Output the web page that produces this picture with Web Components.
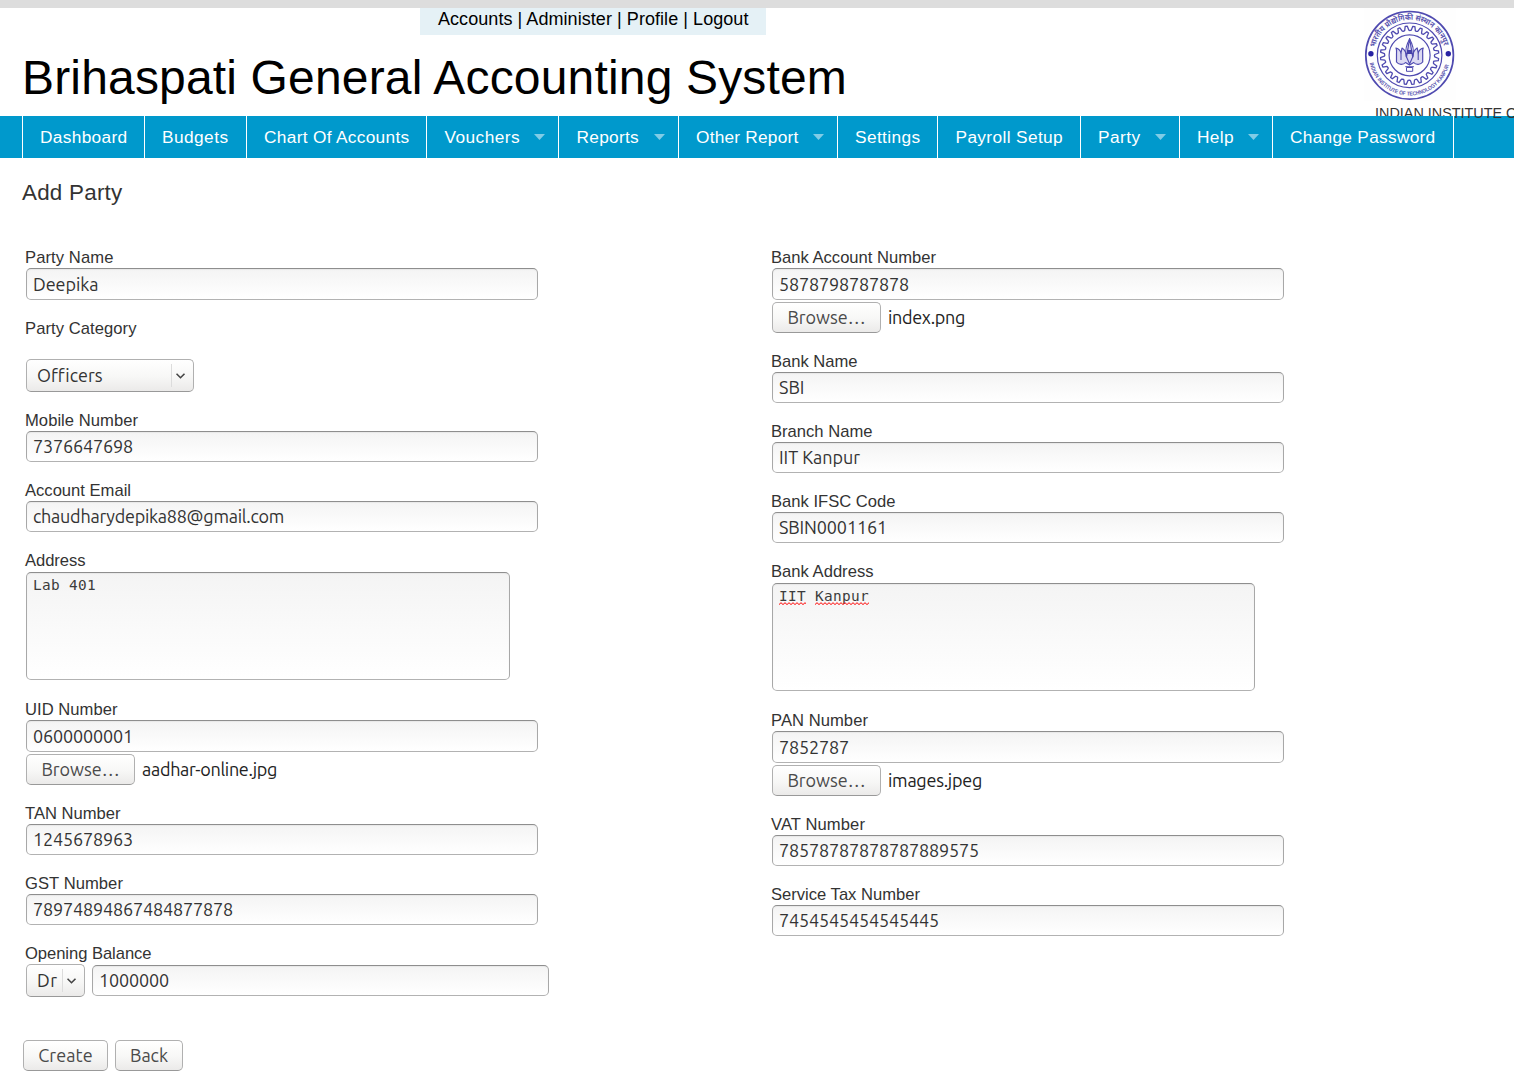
<!DOCTYPE html>
<html lang="en">
<head>
<meta charset="utf-8">
<title>Brihaspati General Accounting System</title>
<style>
html,body{margin:0;padding:0}
body{background:#fff;font-family:"Liberation Sans",Arial,sans-serif;color:#333;width:1514px;height:1076px;overflow:hidden}
</style>
</head>
<body>
<account-page></account-page>
<script>
const define=(name,render,after)=>customElements.define(name,class extends HTMLElement{
  connectedCallback(){
    if(this.shadowRoot)return;
    this.attachShadow({mode:'open'}).innerHTML=render(this);
    if(after)after(this);
  }
});
const at=(el,n,d='')=>el.getAttribute(n)??d;

define('account-page',()=>`
<style>
:host{display:flex;flex-direction:column;width:1514px;height:1076px;overflow:hidden}
h2{font-weight:400;font-size:22.4px;line-height:26px;margin:22px 0 0 22px;color:#333}
.columns{display:flex;padding:41px 0 0 25px;height:834px;box-sizing:border-box;flex:none}
.col{display:flex;flex-direction:column;width:746px;flex:none}
.actions{display:flex;gap:7px;padding-left:23px}
</style>
<page-header></page-header>
<nav-bar></nav-bar>
<h2><fit-text w="100.5">Add Party</fit-text></h2>
<div class="columns">
 <div class="col">
  <form-field label="Party Name" lw="88.5" h="71"><text-box h="32" value="Deepika" vw="65.5"></text-box></form-field>
  <form-field label="Party Category" lw="111.5" h="92" gap="20"><select-box w="168" value="Officers" vw="65"></select-box></form-field>
  <form-field label="Mobile Number" lw="113" h="70"><text-box value="7376647698" vw="100"></text-box></form-field>
  <form-field label="Account Email" lw="106" h="70"><text-box value="chaudharydepika88@gmail.com" vw="251"></text-box></form-field>
  <form-field label="Address" lw="60.5" h="149" gap="1"><text-area w="484"><fit-text w="63">Lab 401</fit-text></text-area></form-field>
  <form-field label="UID Number" lw="92.500" h="104"><text-box h="32" value="0600000001" vw="100"></text-box><file-picker file="aadhar-online.jpg" fw="135"></file-picker></form-field>
  <form-field label="TAN Number" lw="95.5" h="70"><text-box value="1245678963" vw="100"></text-box></form-field>
  <form-field label="GST Number" lw="98" h="70"><text-box value="78974894867484877878" vw="200"></text-box></form-field>
  <form-field label="Opening Balance" lw="126.5" h="70"><opening-balance></opening-balance></form-field>
 </div>
 <div class="col">
  <form-field label="Bank Account Number" lw="165" h="104"><text-box h="32" value="5878798787878" vw="130"></text-box><file-picker file="index.png" fw="77"></file-picker></form-field>
  <form-field label="Bank Name" lw="86.5" h="70"><text-box value="SBI" vw="25.5"></text-box></form-field>
  <form-field label="Branch Name" lw="101.5" h="70"><text-box value="IIT Kanpur" vw="81"></text-box></form-field>
  <form-field label="Bank IFSC Code" lw="124.5" h="70"><text-box value="SBIN0001161" vw="108"></text-box></form-field>
  <form-field label="Bank Address" lw="102.5" h="149" gap="1"><text-area w="483"><misspelled-word><fit-text w="27">IIT</fit-text></misspelled-word><fit-text w="9">&nbsp;</fit-text><misspelled-word><fit-text w="54">Kanpur</fit-text></misspelled-word></text-area></form-field>
  <form-field label="PAN Number" lw="97" h="104"><text-box h="32" value="7852787" vw="70"></text-box><file-picker file="images.jpeg" fw="94"></file-picker></form-field>
  <form-field label="VAT Number" lw="94" h="70"><text-box value="78578787878787889575" vw="200"></text-box></form-field>
  <form-field label="Service Tax Number" lw="149" h="70"><text-box value="7454545454545445" vw="160"></text-box></form-field>
 </div>
</div>
<div class="actions"><push-button w="85" tw="54.5">Create</push-button><push-button w="68" tw="38">Back</push-button></div>`);

define('page-header',()=>`
<style>
:host{display:block;height:116px;box-sizing:border-box;border-top:8px solid #ddd;position:relative;color:#000;flex:none}
.links{margin-left:420px;width:346px;height:27px;background:#e5f1f6;box-sizing:border-box;padding-left:18px;font-size:18px;line-height:22px;white-space:pre}
h1{margin:15px 0 0 22px;font-weight:400;font-size:48px;line-height:55px}
.brand{position:absolute;z-index:1;left:1360px;top:0;width:154px;overflow:hidden;height:122px;color:#333}
iit-seal{margin:0 0 0 4px}
.name{margin:4px 0 0 15px;font-size:14.4px;line-height:18px;white-space:nowrap}
</style>
<div class="links"><fit-text w="310.5">Accounts | Administer | Profile | Logout</fit-text></div>
<h1><fit-text w="825">Brihaspati General Accounting System</fit-text></h1>
<div class="brand"><iit-seal></iit-seal><div class="name">INDIAN INSTITUTE OF TECHNOLOGY KANPUR</div></div>`);

define('iit-seal',()=>{
  const teeth=24,p=[];
  for(let i=0;i<teeth;i++){
    [[0,24.8],[.25,25.2],[.42,29.2],[.7,29.2],[.88,25.2]].forEach(([f,r])=>{
      const a=(i+f)/teeth*Math.PI*2;
      p.push((45.6+r*Math.cos(a)).toFixed(2)+','+(47.3+r*Math.sin(a)).toFixed(2));
    });
  }
  return `
<style>:host{display:block;width:92px;height:92px}svg{display:block}text{font-family:"Liberation Sans","Noto Sans","Noto Sans Devanagari",sans-serif;fill:#5a55b0;font-weight:700}</style>
<svg width="92" height="93" viewBox="0 0 92 93" fill="none" stroke="#4f4ab0">
<rect width="92" height="93" fill="#fefefe" stroke="none"/>
<circle cx="45.6" cy="47.3" r="43.8" stroke-width="1.7"/>
<circle cx="45.6" cy="47.3" r="32.3" stroke-width="1.2"/>
<circle cx="45.6" cy="47.3" r="20.5" stroke-width="1.2"/>
<polygon points="${p.join(' ')}" stroke-width="1.3" stroke-linejoin="round"/>
<circle cx="6.9" cy="45.7" r="2.7" fill="#2722a3" stroke="none"/><circle cx="84.3" cy="45.7" r="2.7" fill="#2722a3" stroke="none"/>
<path fill="#dcdaf2" stroke-width="1.2" stroke-linejoin="round" d="M32 40c3.500 1 4.500 3 5 5l1-5c3 2 4.500 5 4.500 9L45.600 30.500 48.700 49c0-4 1.500-7 4.500-9l1 5c.5-2 1.500-4 5-5-1 2-.5 4-.5 6v8c-2 3-7 3-9 .5l-4.100 2.500-4.100-2.500c-2 2.500-7 2.500-9-.5v-8c0-2 .5-4-.5-6z"/>
<path d="M45.600 31c-3.500 6-4.500 11-3.500 17l3.500 8 3.500-8c1-6 0-11-3.500-17zM37 45v7M54.200 45v7" stroke-width="1.100"/>
<path d="M43 42h5.200v4H43z" fill="#4540a8" stroke="none"/>
<path d="M41.300 58.700h8.600M42.500 59.500h6.200v3.800h-6.200z" stroke-width="1"/>
<path id="upper" d="M10.500 41.500A35.600 35.600 0 0 1 80.700 41.500" stroke="none"/>
<path id="lower" d="M5.800 55A40.600 40.600 0 0 0 85.400 55" stroke="none"/>
<text font-size="8" stroke="none"><textPath href="#upper" textLength="94" lengthAdjust="spacingAndGlyphs" startOffset="2">भारतीय प्रौद्योगिकी संस्थान कानपुर</textPath></text>
<text font-size="5.600" stroke="none"><textPath href="#lower" textLength="109" lengthAdjust="spacingAndGlyphs" startOffset="0">INDIAN INSTITUTE OF TECHNOLOGY KANPUR</textPath></text>
</svg>`});

define('nav-bar',()=>`
<style>
:host{display:block;height:42px;background:#09c;flex:none}
.menu{display:flex;height:42px;margin-left:22px;border-left:1px solid #fff;width:max-content;background:#09c;position:relative;z-index:2}
</style>
<div class="menu">
<nav-item w="122" tw="87.500">Dashboard</nav-item><nav-item w="102" tw="66.500">Budgets</nav-item><nav-item w="180" tw="145.500">Chart Of Accounts</nav-item>
<nav-item w="132" tw="75.500" x=".5" more>Vouchers</nav-item><nav-item w="120" tw="62.500" x=".5" more>Reports</nav-item><nav-item w="159" tw="102.500" more>Other Report</nav-item>
<nav-item w="100" tw="65.500">Settings</nav-item><nav-item w="143" tw="107.500" x=".5">Payroll Setup</nav-item><nav-item w="99" tw="42.500" more>Party</nav-item><nav-item w="93" tw="37" more>Help</nav-item><nav-item w="181" tw="145.500">Change Password</nav-item>
</div>`);

define('nav-item',el=>`
<style>
:host{display:flex;box-sizing:border-box;width:${at(el,'w')}px;height:42px;border-right:1px solid #fff;padding:0 13px 0 ${17+Number(at(el,'x','0'))}px;justify-content:space-between;align-items:flex-start;color:#fff;font-size:17.300px;line-height:42px;white-space:nowrap}
svg{display:block;margin-top:18px}
</style>
<fit-text w="${at(el,'tw')}"><slot></slot></fit-text>${el.hasAttribute('more')?'<svg width="11" height="6"><path d="M0 0h11L5.500 6z" fill="#80cce6"/></svg>':''}`);

define('form-field',el=>`
<style>
:host{display:flex;flex-direction:column;height:${at(el,'h')}px;flex:none}
label{display:block;height:${21+Number(at(el,'gap','0'))}px;font-size:16.600px;line-height:21px;white-space:nowrap}
.controls{display:flex;flex-direction:column;gap:2px;padding-left:1px}
</style>
<label><fit-text w="${at(el,'lw')}">${at(el,'label')}</fit-text></label><div class="controls"><slot></slot></div>`);

const uiFont='font-family:Ubuntu,"Noto Sans",sans-serif;font-size:18px;white-space:nowrap;color:#333;';
const inset='box-sizing:border-box;border:1px solid #a8a8a8;border-top-color:#8e8e8e;border-bottom-color:#b2b2b2;border-radius:5px;background:linear-gradient(#f4f4f4,#fff);box-shadow:inset 0 1px 1px #e8e8e8;';
const raised='box-sizing:border-box;border:1px solid #b0b0b0;border-bottom-color:#999;border-radius:5px;background:linear-gradient(#fff,#f7f7f6 55%,#ebeae9);';

define('text-box',el=>`
<style>:host{display:block;width:${at(el,'w','512')}px;height:${at(el,'h','31')}px;${inset}${uiFont}padding-left:6px;line-height:${Number(at(el,'h','31'))-2}px}</style>
<fit-text w="${at(el,'vw')}">${at(el,'value')}</fit-text>`);

define('text-area',el=>`
<style>:host{display:block;width:${at(el,'w')}px;height:108px;${inset}padding:4px 6px;font-family:"DejaVu Sans Mono",monospace;font-size:14.400px;line-height:17px;color:#3c3c3c;white-space:nowrap}</style>
<slot></slot>`);

define('misspelled-word',()=>`
<style>:host{display:inline-block;height:19px;position:relative}
svg{position:absolute;left:0;top:14px;width:100%;height:4px}</style>
<slot></slot><svg><defs><pattern id="wave" width="4" height="4" patternUnits="userSpaceOnUse"><path d="M-1 3.500L2 .7 5 3.500" fill="none" stroke="#f00" stroke-width="1"/></pattern></defs><rect width="100%" height="4" fill="url(#wave)"/></svg>`);

define('select-box',el=>`
<style>
:host{display:flex;align-items:center;width:${at(el,'w')}px;height:33px;${raised}${uiFont}padding:0 7px 0 10px;line-height:31px}
.value{flex:1;height:31px}
.line{width:1px;height:23px;background:#dcdcdc;margin-right:4px}
svg{display:block;margin-top:1px}
</style>
<span class="value"><fit-text w="${at(el,'vw')}">${at(el,'value')}</fit-text></span><span class="line"></span>
<svg width="10" height="6" viewBox="0 0 10 6"><path d="M.5 .7l4 4 4-4" fill="none" stroke="#444" stroke-width="1.600"/></svg>`);

define('push-button',el=>`
<style>:host{display:flex;justify-content:center;width:${at(el,'w')}px;height:31px;${raised}${uiFont}line-height:28px;color:#4a4a4a}</style>
<fit-text w="${at(el,'tw')}"><slot></slot></fit-text>`);

define('file-picker',el=>`
<style>:host{display:flex;gap:7px;height:31px;${uiFont}line-height:30px;color:#222}</style>
<push-button w="109" tw="78">Browse…</push-button><fit-text w="${at(el,'fw')}">${at(el,'file')}</fit-text>`);

define('opening-balance',()=>`
<style>:host{display:flex;gap:7px;align-items:center}</style>
<select-box w="59" value="Dr" vw="20.500"></select-box><text-box w="457" value="1000000" vw="70"></text-box>`);

// Spreads its letters so that the run takes the width given in w.
define('fit-text',()=>'<style>:host{display:inline-block;white-space:pre;flex:none}</style><slot></slot>',el=>{
  const slot=el.querySelector('slot');
  const count=slot?slot.assignedNodes().reduce((s,x)=>s+x.textContent.length,0):el.textContent.length;
  if(count)el.style.letterSpacing=((Number(at(el,'w'))-el.getBoundingClientRect().width)/count)+'px';
});
</script>
</body>
</html>
